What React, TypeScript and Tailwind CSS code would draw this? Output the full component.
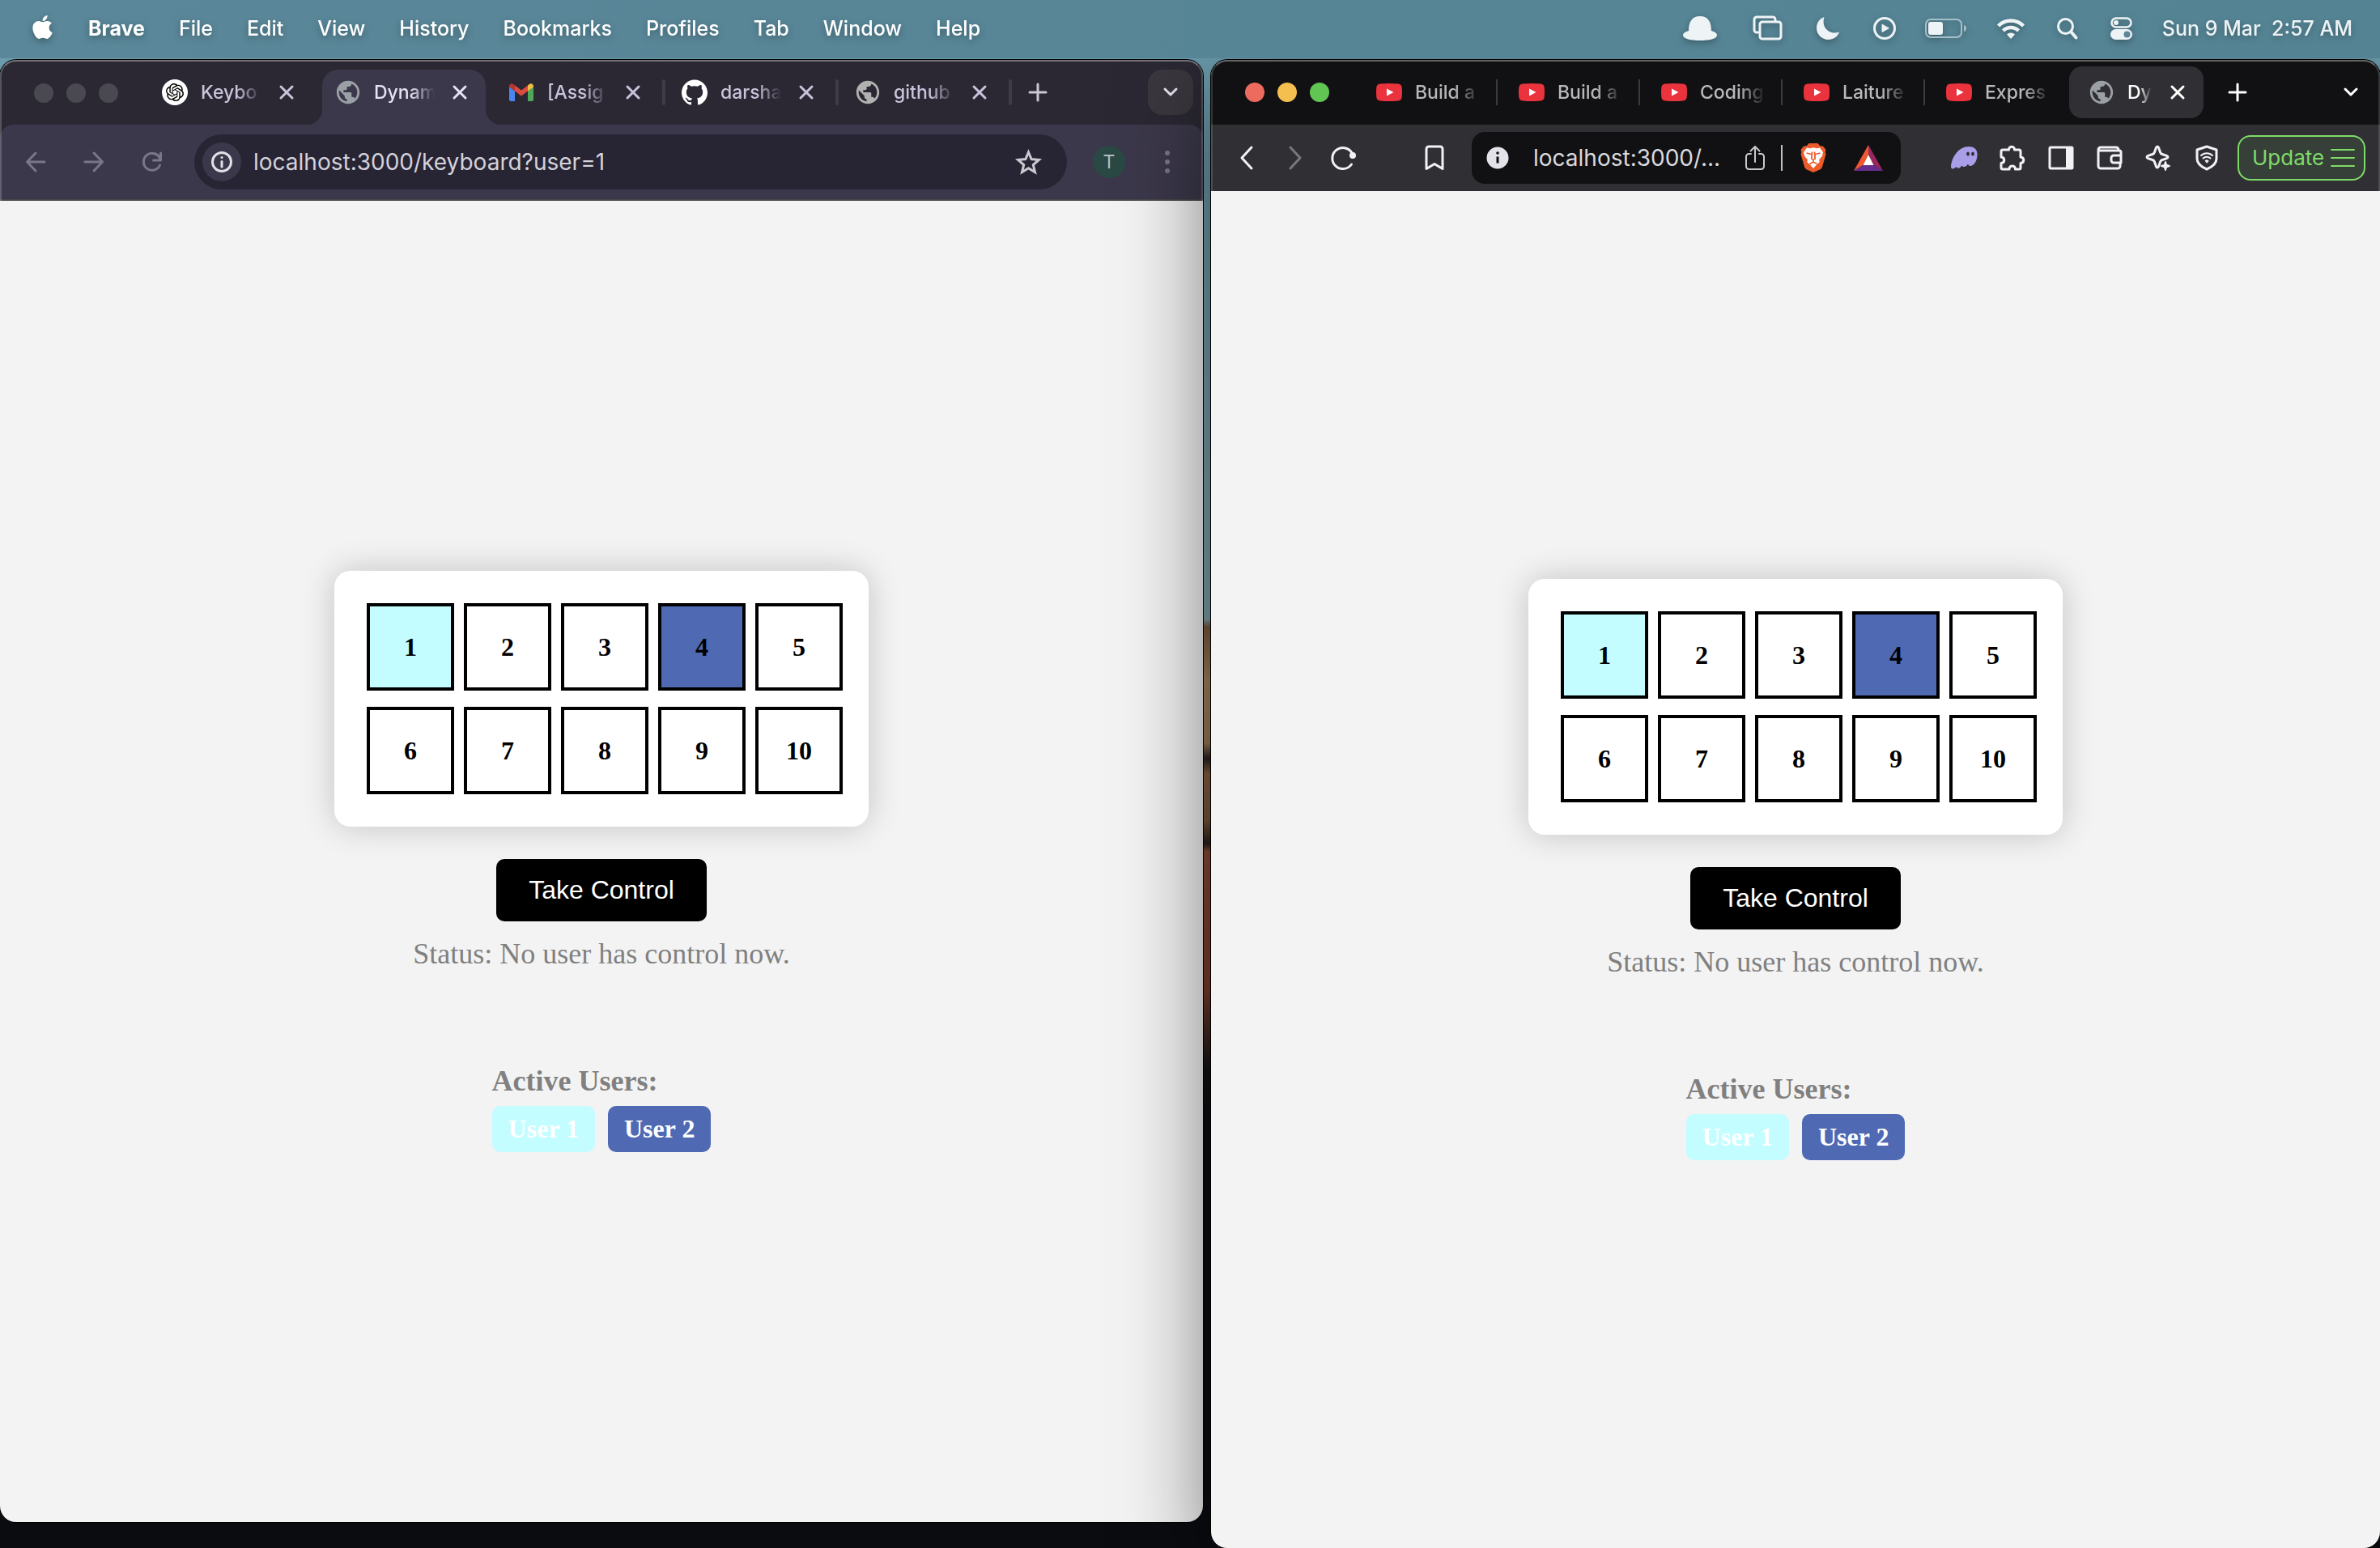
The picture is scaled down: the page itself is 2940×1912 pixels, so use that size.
import React from "react";
import { FaApple } from "react-icons/fa";
import { MdPublic } from "react-icons/md";
import { SiGithub, SiOpenai } from "react-icons/si";

type IconProps = {
  w: number;
  h: number;
  sw?: number;
  className?: string;
  children: React.ReactNode;
};

/* Line icon whose view box equals its drawn size. */
function Line({ w, h, sw = 2, className = "", children }: IconProps) {
  return (
    <svg
      width={w}
      height={h}
      viewBox={`0 0 ${w} ${h}`}
      fill="none"
      stroke="currentColor"
      strokeWidth={sw}
      strokeLinecap="round"
      strokeLinejoin="round"
      className={`shrink-0 overflow-visible ${className}`}
      aria-hidden="true"
    >
      {children}
    </svg>
  );
}

const Cross = () => (
  <Line w={16} h={16} sw={3}>
    <path d="M1 1l14 14M15 1L1 15" />
  </Line>
);

const Plus = ({ className = "" }: { className?: string }) => (
  <Line w={20} h={20} sw={3} className={className}>
    <path d="M10 0v20M0 10h20" />
  </Line>
);

const Chevron = () => (
  <Line w={18} h={10} sw={3}>
    <path d="M2 1l7 7 7-7" />
  </Line>
);

const Globe = ({ className = "" }: { className?: string }) => (
  <MdPublic size={34} className={`-m-px shrink-0 ${className}`} />
);

const GmailLogo = () => (
  <svg width="30" height="22" viewBox="0 0 30 22" aria-hidden="true" className="shrink-0">
    <path d="M0 4v16a2 2 0 0 0 2 2h5V9z" fill="#4a86ee" />
    <path d="M30 4v16a2 2 0 0 1-2 2h-5V9z" fill="#4fa75a" />
    <path d="M7 2.400v7.100l8 6 8-6V2.400l-8 6z" fill="#dd4b3e" />
    <path d="M0 3.500C0 .5 3-.8 5.300 1L7 2.400V9.500L0 4.500z" fill="#b3352b" />
    <path d="M30 3.500c0-3-3-4.300-5.300-2.500L23 2.400v7.100l7-5z" fill="#f2bd42" />
  </svg>
);

const YouTubeLogo = () => (
  <svg width="32" height="22" viewBox="0 0 32 22" aria-hidden="true" className="shrink-0">
    <path
      d="M5 .5Q16-.5 27 .5q4.300.4 4.700 4.500.6 6 0 12-.4 4.100-4.700 4.500-11 1-22 0Q.7 21.100.3 17q-.6-6 0-12Q.7.900 5 .5z"
      fill="#ea333d"
    />
    <path d="M13 6.500l8.500 4.500-8.500 4.500z" fill="#fff" />
  </svg>
);

const BraveLion = () => (
  <svg width="32" height="36" viewBox="0 0 32 36" aria-hidden="true" className="shrink-0">
    <path
      d="M10.500 0h11l3 3.500c2-.6 3.800.2 4.700 1.500L31.500 8l-.8 3 .8 2.500-4.300 15c-.6 2-1.600 3-3.200 4L16 36l-8-3.500c-1.600-1-2.600-2-3.200-4L.5 13.500l.8-2.500-.8-3L2.800 5c.9-1.300 2.700-2.100 4.700-1.500z"
      fill="#ec5b2a"
    />
    <path
      d="M8 5.500l4 .8 4-1 4 1 4-.8 4 5.500-1 4.500-4 5 .8 2.500L19.500 27 16 31l-3.500-4-4.300-4 .8-2.500-4-5L4 11z"
      fill="#fff"
    />
    <path
      d="M7.500 12l6 1.500M24.500 12l-6 1.500M14.500 10.500l-.7 8.500 2.200 1 2.200-1-.7-8.500M16 20v3M11.500 25.500L16 23l4.500 2.500"
      fill="none"
      stroke="#ec5b2a"
      strokeWidth="1.800"
    />
  </svg>
);

const Sep = () => <span className="h-8 w-1 rounded-sm bg-[#3f3c45]" />;

/* ---------- menu bar ---------- */

const menus = ["File", "Edit", "View", "History", "Bookmarks", "Profiles", "Tab", "Window", "Help"];

function MenuBar() {
  return (
    <header className="relative z-20 flex h-[72px] shrink-0 items-center justify-between bg-[linear-gradient(90deg,#5a8799,#548494)] pr-[34px] pb-0.5 pl-[38px] text-[25px] leading-8 text-white">
      <nav className="flex items-center gap-[42px] [filter:drop-shadow(0_3px_4px_rgba(0,0,0,0.3))]" aria-label="Menu bar">
        <button aria-label="Apple menu" className="-mt-1">
          <FaApple size={33} className="-mx-0.5" />
        </button>
        <button className="font-bold">Brave</button>
        {menus.map((m) => (
          <button key={m} className="font-medium">
            {m}
          </button>
        ))}
      </nav>
      <div className="flex items-center text-[#eef3f5] [filter:drop-shadow(0_3px_4px_rgba(0,0,0,0.3))]">
        <svg width="42" height="30" viewBox="0 0 42 30" fill="currentColor" aria-hidden="true">
          <path d="M21 0C11 0 7 7 7 18c-4 1-7 3-7 5.500C0 28 10 30 21 30s21-2 21-6.500c0-2.500-3-4.500-7-5.500C35 7 31 0 21 0z" />
        </svg>
        <Line w={34} h={30} sw={3} className="ml-[45px]">
          <path d="M6 20H4a3 3 0 0 1-3-3V4a3 3 0 0 1 3-3h20a3 3 0 0 1 3 3v2" />
          <rect x="8" y="7" width="26" height="21" rx="3" />
        </Line>
        <svg width="28" height="28" viewBox="0 0 28 28" fill="currentColor" aria-hidden="true" className="ml-11">
          <path d="M9.500 0C3.500 2 0 7.500 0 13.500 0 21.500 6.500 28 14.500 28c6 0 11.500-3.500 13.500-9.500-10 4-23-4-18.500-18.500z" />
        </svg>
        <Line w={28} h={28} sw={3} className="ml-[42px]">
          <circle cx="14" cy="14" r="12.500" />
          <path d="M11 9.500v9l8-4.500z" fill="currentColor" strokeWidth="1" />
        </Line>
        <svg width="52" height="24" viewBox="0 0 52 24" aria-hidden="true" className="ml-9">
          <rect x="1" y="1" width="44" height="22" rx="6" fill="none" stroke="#a6c0ca" strokeWidth="2" />
          <path d="M48 8c4 1 4 7 0 8z" fill="#a6c0ca" />
          <rect x="4" y="4" width="18" height="16" rx="3" fill="currentColor" />
        </svg>
        <svg width="34" height="25" viewBox="0 0 34 25" aria-hidden="true" className="ml-[37px]" fill="none" stroke="currentColor" strokeWidth="4.500">
          <path d="M1.500 9a22 22 0 0 1 31 0" />
          <path d="M7.500 15a13.500 13.500 0 0 1 19 0" />
          <path d="M17 25l-5-5.500a7 7 0 0 1 10 0z" fill="currentColor" stroke="none" />
        </svg>
        <Line w={25} h={26} sw={3} className="ml-10">
          <circle cx="10.500" cy="10.500" r="9" />
          <path d="M17.500 17.500l6 7" strokeWidth="4" />
        </Line>
        <svg width="27" height="28" viewBox="0 0 27 28" aria-hidden="true" className="ml-[41px]">
          <rect x="1.500" y="1.500" width="24" height="11" rx="5.500" fill="none" stroke="currentColor" strokeWidth="2.500" />
          <circle cx="7" cy="7" r="3" fill="currentColor" />
          <rect x="0" y="15" width="27" height="13" rx="6.500" fill="currentColor" />
          <circle cx="20.500" cy="21.500" r="4" fill="#5b8797" />
        </svg>
        <time className="ml-[37px] font-medium whitespace-pre">Sun 9 Mar  2:57 AM</time>
      </div>
    </header>
  );
}

/* ---------- page shown in both browsers ---------- */

const C1 = "bg-[#c3fdff]";
const C2 = "bg-[#4f69b2]";

function KeyboardPage() {
  return (
    <main className="flex flex-1 flex-col items-center justify-center bg-[#f3f3f3] font-['Liberation_Serif',serif]">
      <div className="grid grid-cols-5 gap-x-3 gap-y-5 rounded-[20px] bg-white py-10 pr-8 pl-10 shadow-[0_0_40px_rgba(0,0,0,0.2)]">
        {Array.from({ length: 10 }, (_, i) => (
          <button
            key={i}
            className={`size-[108px] border-4 border-black text-[32px] leading-9 font-bold text-black ${
              i === 0 ? C1 : i === 3 ? C2 : "bg-white"
            }`}
          >
            {i + 1}
          </button>
        ))}
      </div>
      <button className="mt-10 rounded-[10px] bg-black px-10 py-5 font-['Liberation_Sans',sans-serif] text-[32px] leading-[37px] text-white">
        Take Control
      </button>
      <p className="mt-[19px] text-[36px] leading-[42px] text-[#808080]">Status: No user has control now.</p>
      <section className="mt-[115px]">
        <h3 className="text-[36px] leading-[42px] font-bold text-[#808080]">Active Users:</h3>
        <ul className="mt-2.5 flex gap-4 text-[32px] leading-[37px] font-bold text-white">
          <li className={`rounded-[10px] px-5 py-2.5 ${C1}`}>User 1</li>
          <li className={`rounded-[10px] px-5 py-2.5 ${C2}`}>User 2</li>
        </ul>
      </section>
    </main>
  );
}

/* ---------- Chrome window ---------- */

const chromeTabs = [
  {
    title: "Keybo",
    icon: (
      <span className="flex size-8 items-center justify-center rounded-full bg-white text-black">
        <SiOpenai size={22} />
      </span>
    ),
  },
  { title: "Dynam", active: true, icon: <Globe className="text-[#9aa0a6]" /> },
  { title: "[Assig", icon: <GmailLogo /> },
  { title: "darsha", icon: <SiGithub size={32} className="text-white" /> },
  { title: "github", icon: <Globe className="text-[#b1b1b1]" /> },
];

function ChromeWindow() {
  return (
    <section className="mb-8 flex min-w-0 flex-col overflow-hidden rounded-[20px] shadow-[0_0_0_1px_#000]" aria-label="Chrome">
      <div className="relative rounded-t-[20px] bg-[#2b2833] after:pointer-events-none after:absolute after:inset-0 after:rounded-t-[20px] after:border-2 after:border-b-0 after:border-white/20 after:border-t-white/35">
        <div className="flex h-20 pt-3">
          <div className="flex w-[184px] shrink-0 gap-4 pt-[17px] pl-[42px]">
            <span className="size-6 rounded-full bg-[#4a4851]" />
            <span className="size-6 rounded-full bg-[#4a4851]" />
            <span className="size-6 rounded-full bg-[#4a4851]" />
          </div>
          {chromeTabs.map((t, i) => (
            <div key={t.title} className="flex">
              <div
                className={`relative flex h-[68px] w-[202px] items-center pb-3 pl-4 ${
                  t.active
                    ? "rounded-t-[20px] bg-[#3c384b] text-[#e6e2f3] before:absolute before:bottom-0 before:-left-5 before:size-5 before:bg-[radial-gradient(circle_at_0_0,transparent_20px,#3c384b_21px)] after:absolute after:-right-5 after:bottom-0 after:size-5 after:bg-[radial-gradient(circle_at_100%_0,transparent_20px,#3c384b_21px)]"
                    : "text-[#c9c3dc]"
                }`}
              >
                <span className="flex size-8 shrink-0 items-center justify-center">{t.icon}</span>
                <span className="ml-4 w-[75px] text-[23px] leading-8 font-medium whitespace-nowrap [mask-image:linear-gradient(90deg,#000_60%,transparent)]">
                  {t.title}
                </span>
                <button aria-label="Close tab" className="ml-[23px]">
                  <Cross />
                </button>
              </div>
              <div className="flex h-14 w-3 items-center justify-center">{i > 1 && <Sep />}</div>
            </div>
          ))}
          <button aria-label="New tab" className="ml-[18px] h-14 text-[#c9c7d0]">
            <Plus />
          </button>
          <button aria-label="Search tabs" className="mr-3 ml-auto flex size-14 items-center justify-center rounded-[18px] bg-[#3a373e] text-[#e6e2f0]">
            <Chevron />
          </button>
        </div>
        <div className="flex h-[94px] items-center rounded-t-[16px] border-b-2 border-[#47454b] bg-[#3c384b] pr-5 pl-2 text-[#7a768a]">
          <button aria-label="Back" className="flex w-[72px] justify-center">
            <Line w={24} h={24} sw={3}>
              <path d="M23 12H1.500M12 1L1.500 12 12 23" />
            </Line>
          </button>
          <button aria-label="Forward" className="flex w-[72px] justify-center">
            <Line w={24} h={24} sw={3}>
              <path d="M1 12h21.500M12 1l10.500 11L12 23" />
            </Line>
          </button>
          <button aria-label="Reload" className="flex w-[72px] justify-center">
            <Line w={24} h={24} sw={3}>
              <path d="M21.500 16A10.500 10.500 0 1 1 22 9" />
              <path d="M22.500 1v9h-9" />
            </Line>
          </button>
          <div className="ml-4 flex h-[68px] min-w-0 flex-1 items-center rounded-full bg-[#272433] pr-8 pl-2.5 text-[#e1dfe8]">
            <button aria-label="Site information" className="flex size-12 shrink-0 items-center justify-center rounded-full bg-[#3c384b]">
              <Line w={26} h={26} sw={3}>
                <circle cx="13" cy="13" r="11.500" />
                <path d="M13 12.500V19" />
                <path d="M13 7.500v.1" />
              </Line>
            </button>
            <input
              aria-label="Address"
              defaultValue="localhost:3000/keyboard?user=1"
              className="ml-[15px] min-w-0 flex-1 bg-transparent text-[28px] leading-9 text-[#d4d2da] outline-none"
            />
            <button aria-label="Bookmark this tab" className="text-[#cbc9d0]">
              <Line w={31} h={30} sw={3} className="[stroke-linejoin:miter]">
                <path d="M15.500 3l3.600 8.600 9.300.8-7.100 6.100 2.200 9.100-8-4.900-8 4.900 2.200-9.100-7.100-6.100 9.300-.8z" />
              </Line>
            </button>
          </div>
          <button aria-label="Profile" className="ml-8 size-10 shrink-0 rounded-full bg-[#2a4945] text-[23px] leading-10 text-[#b5bcc4]">
            T
          </button>
          <button aria-label="Menu" className="ml-7 flex w-12 flex-col items-center gap-[5px]">
            <span className="size-1.5 rounded-full bg-current" />
            <span className="size-1.5 rounded-full bg-current" />
            <span className="size-1.5 rounded-full bg-current" />
          </button>
        </div>
      </div>
      <KeyboardPage />
    </section>
  );
}

/* ---------- Brave window ---------- */

const braveTabs = ["Build a", "Build a", "Coding", "Laiture", "Expres"];

function BraveWindow() {
  return (
    <section
      className="relative z-10 flex min-w-0 flex-col rounded-[20px] shadow-[0_0_0_1px_#000,0_36px_110px_rgba(0,0,0,0.55)]"
      aria-label="Brave"
    >
      <div className="flex flex-1 flex-col overflow-hidden rounded-[20px]">
        <div className="relative rounded-t-[20px] bg-[#111113] after:pointer-events-none after:absolute after:inset-0 after:rounded-t-[20px] after:border-2 after:border-b-0 after:border-white/15 after:border-t-white/35">
          <div className="flex h-20 items-center">
            <div className="flex w-[180px] shrink-0 gap-4 pl-[42px]">
              <button aria-label="Close" className="size-6 rounded-full bg-[#ed6a5f]" />
              <button aria-label="Minimize" className="size-6 rounded-full bg-[#f5bf4f]" />
              <button aria-label="Zoom" className="size-6 rounded-full bg-[#61c554]" />
            </div>
            {braveTabs.map((t, i) => (
              <div key={i} className="flex w-44 items-center pl-6 text-[#b9b9bb]">
                <YouTubeLogo />
                <span className="ml-4 w-[81px] text-[23px] leading-8 font-medium whitespace-nowrap [mask-image:linear-gradient(90deg,#000_60%,transparent)]">
                  {t}
                </span>
                {i < 4 && <span className="ml-[19px] h-8 w-0.5 bg-[#3b3b3e]" />}
              </div>
            ))}
            <div className="flex h-16 w-[166px] items-center rounded-[16px] bg-[#302f34] pl-6 text-white">
              <span className="flex size-8 items-center justify-center">
                <Globe className="text-[#9aa0a6]" />
              </span>
              <span className="ml-4 w-[30px] text-[23px] leading-8 font-medium whitespace-nowrap [mask-image:linear-gradient(90deg,#000_50%,transparent)]">
                Dy
              </span>
              <button aria-label="Close tab" className="ml-6">
                <Cross />
              </button>
            </div>
            <button aria-label="New tab" className="ml-8 text-white">
              <Plus />
            </button>
            <button aria-label="Search tabs" className="mr-[27px] ml-auto text-white">
              <Chevron />
            </button>
          </div>
          <div className="flex h-[82px] items-center bg-[#302f34] pr-[18px] pl-3.5 text-[#f2f2f4]">
            <button aria-label="Back" className="flex w-[60px] justify-center">
              <Line w={14} h={26} sw={3}>
                <path d="M13 0L1 13l12 13" />
              </Line>
            </button>
            <button aria-label="Forward" className="flex w-[60px] justify-center text-[#79787c]">
              <Line w={14} h={26} sw={3}>
                <path d="M1 0l12 13L1 26" />
              </Line>
            </button>
            <button aria-label="Reload" className="flex w-[60px] justify-center">
              <Line w={30} h={28} sw={3}>
                <path d="M24.500 22A13 13 0 1 1 26 10" />
                <circle cx="26" cy="11" r="3" fill="currentColor" strokeWidth="2" />
              </Line>
            </button>
            <button aria-label="Bookmark" className="ml-[52px] flex w-[60px] justify-center">
              <Line w={22} h={30} sw={3}>
                <path d="M1 28.500V4a3 3 0 0 1 3-3h14a3 3 0 0 1 3 3v24.500l-10-6z" />
              </Line>
            </button>
            <div className="ml-4 flex h-16 min-w-0 flex-1 items-center rounded-[16px] bg-[#111113] pr-[22px] pl-[18px] text-[#c9c9cc]">
              <svg width="28" height="28" viewBox="0 0 28 28" aria-hidden="true" className="shrink-0">
                <circle cx="14" cy="14" r="13.500" fill="#e4e3e9" />
                <circle cx="14" cy="8" r="1.800" fill="#111113" />
                <path d="M14 12.500v8" stroke="#111113" strokeWidth="3" />
              </svg>
              <input
                aria-label="Address"
                defaultValue="localhost:3000/..."
                className="ml-[30px] min-w-0 flex-1 bg-transparent text-[28px] leading-9 text-[#dadadd] outline-none"
              />
              <button aria-label="Share">
                <Line w={24} h={30} sw={2}>
                  <path d="M7 10H4.500A3.500 3.500 0 0 0 1 13.500v12A3.500 3.500 0 0 0 4.500 29h15a3.500 3.500 0 0 0 3.500-3.500v-12a3.500 3.500 0 0 0-3.500-3.500H17" />
                  <path d="M12 20V1M6.500 6.500L12 1l5.500 5.500" />
                </Line>
              </button>
              <span className="ml-5 h-8 w-0.5 bg-[#c0c0c3]" />
              <button aria-label="Brave Shields" className="ml-[22px]">
                <BraveLion />
              </button>
              <button aria-label="Brave Rewards" className="ml-[34px]">
                <svg width="36" height="32" viewBox="0 0 36 32" aria-hidden="true">
                  <path d="M18 0L0 32l11.500-7L18 12z" fill="#f1562f" />
                  <path d="M18 0l18 32-11.500-7L18 12z" fill="#99275e" />
                  <path d="M0 32h36l-11.500-7h-13z" fill="#662d8f" />
                  <path d="M18 12l6.500 13h-13z" fill="#fff" />
                </svg>
              </button>
            </div>
            <div className="ml-12 flex items-center">
              <button aria-label="Phantom" className="flex w-[60px] justify-center">
                <svg width="34" height="28" viewBox="0 0 34 28" aria-hidden="true">
                  <path
                    d="M1 25C2 12 11 0 23 0c8 0 11 5 10.500 11-.5 8-5 13-8.500 13-2 0-2.500-1.500-3-2.500-2 3.500-5.500 5-7.500 2-2 3-5 4.500-7 1.500C5 28 1 28.500 1 25z"
                    fill="#a99fe8"
                  />
                  <ellipse cx="22" cy="9" rx="1.900" ry="2.600" fill="#302f34" />
                  <ellipse cx="28" cy="9" rx="1.900" ry="2.600" fill="#302f34" />
                </svg>
              </button>
              <button aria-label="Extensions" className="flex w-[60px] justify-center">
                <Line w={30} h={30} sw={3}>
                  <path d="M3 5h7.500c0-5 7-5 7 0H23a2 2 0 0 1 2 2v7c5 .5 5 7 0 7.500V27a2 2 0 0 1-2 2h-4.500c0-5.500-7.500-5.500-7.500 0H3a2 2 0 0 1-2-2v-5.500c5-.5 5-7 0-7.500V7a2 2 0 0 1 2-2z" />
                </Line>
              </button>
              <button aria-label="Sidebar" className="flex w-[60px] justify-center">
                <Line w={30} h={28} sw={3}>
                  <rect x="1" y="1" width="28" height="26" rx="1" />
                  <path d="M21 0h8v28h-8z" fill="currentColor" stroke="none" />
                </Line>
              </button>
              <button aria-label="Wallet" className="flex w-[60px] justify-center">
                <Line w={30} h={28} sw={3}>
                  <path d="M29 10V7a2 2 0 0 0-2-2H2M28 21v3a3 3 0 0 1-3 3H4a3 3 0 0 1-3-3V4a3 3 0 0 1 3-3h19a3 3 0 0 1 3 3" />
                  <path d="M29 11h-9a3 3 0 0 0-3 3v3a3 3 0 0 0 3 3h9z" />
                </Line>
              </button>
              <button aria-label="Leo AI" className="flex w-[60px] justify-center">
                <Line w={30} h={30} sw={3}>
                  <path d="M14 1c1 0 1.300.6 1.600 1.500l1.900 5.500a4 4 0 0 0 2.500 2.500l5.500 1.900c2 .8 2 2.500 0 3.200L20 17.500a4 4 0 0 0-2.500 2.500l-1.900 5.500c-.8 2-2.500 2-3.200 0L10.500 20A4 4 0 0 0 8 17.500l-5.500-1.900c-2-.8-2-2.500 0-3.200L8 10.500A4 4 0 0 0 10.500 8l1.900-5.500C12.700 1.600 13 1 14 1z" />
                  <path d="M24 20l1.200 3.800L29 25l-3.800 1.200L24 30l-1.200-3.800L19 25l3.800-1.200z" fill="currentColor" strokeWidth="2" />
                </Line>
              </button>
              <button aria-label="VPN" className="flex w-[60px] justify-center">
                <Line w={28} h={30} sw={3}>
                  <path d="M14 1l12 4v11c0 6-6 10.500-12 13C8 26.500 2 22 2 16V5z" />
                  <path d="M7 12a10 10 0 0 1 14 0M9.500 15.500a6.500 6.500 0 0 1 9 0" strokeWidth="2" />
                  <path d="M14 21l-2-2.500a3 3 0 0 1 4 0z" fill="currentColor" strokeWidth="1" />
                </Line>
              </button>
            </div>
            <button className="ml-2 flex h-14 w-[158px] shrink-0 items-center justify-between rounded-[16px] border-2 border-[#7fdc68] bg-[#363f38] pr-[11px] pl-4 text-[26px] leading-8 text-[#7fdc68]">
              Update
              <Line w={30} h={22} sw={2}>
                <path d="M1 1h28M1 11h28M1 21h28" />
              </Line>
            </button>
          </div>
        </div>
        <KeyboardPage />
      </div>
    </section>
  );
}

export default function App() {
  return (
    <div className="flex h-screen flex-col overflow-hidden bg-[linear-gradient(180deg,#6b9dae_0%,#6b98a8_12%,#7fa3a8_40%,#7a5a3e_40.5%,#a8835c_44%,#9a7a58_48%,#2c221f_49%,#8a6142_50%,#7a553a_53%,#2a1d1c_54.500%,#8a4a35_55%,#7a3d2a_64%,#141417_69%,#0b0c10_72%)] font-[Inter,sans-serif]">
      <MenuBar />
      <div className="grid flex-1 grid-cols-[1486fr_1444fr] gap-x-2.5 pt-0.5">
        <ChromeWindow />
        <BraveWindow />
      </div>
    </div>
  );
}
